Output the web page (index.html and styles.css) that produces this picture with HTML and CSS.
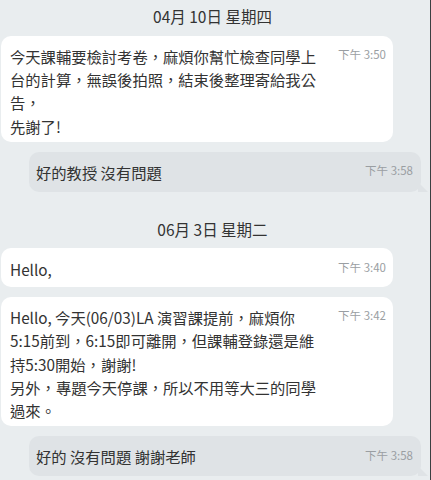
FILE: index.html
```html
<!DOCTYPE html>
<html lang="zh-Hant">
<head>
    <meta charset="UTF-8">
    <meta name="viewport" content="width=device-width, initial-scale=1.0">
    <title>訊息</title>
    <link rel="stylesheet" href="styles.css">
</head>
<body>
    <div class="chat">
        <div class="date">04月 10日 星期四</div>
        <div class="msg in">
            <div class="text">今天課輔要檢討考卷，麻煩你幫忙檢查同學上台的計算，無誤後拍照，結束後整理寄給我公告，<br>先謝了!</div>
            <div class="time">下午 3:50</div>
        </div>
        <div class="msg out">
            <div class="text">好的教授 沒有問題</div>
            <div class="time">下午 3:58</div>
        </div>

        <div class="date second">06月 3日 星期二</div>
        <div class="msg in short">
            <div class="text">Hello,</div>
            <div class="time">下午 3:40</div>
        </div>
        <div class="msg in">
            <div class="text">Hello, 今天(06/03)LA 演習課提前，麻煩你<br>5:15前到，6:15即可離開，但課輔登錄還是維持5:30開始，謝謝!<br>另外，專題今天停課，所以不用等大三的同學過來。</div>
            <div class="time">下午 3:42</div>
        </div>
        <div class="msg out">
            <div class="text">好的 沒有問題 謝謝老師</div>
            <div class="time">下午 3:58</div>
        </div>
    </div>
</body>
</html>
```

FILE: styles.css
```css
* { margin: 0; padding: 0; box-sizing: border-box; }
html, body { height: 100%; }
body { font-family: "Noto Sans CJK TC", "Noto Sans", sans-serif; background: #e9edef; color: #333; overflow: hidden; }
.chat { height: 480px; padding: 6px 0 0 1px; width: 431px; border-right: 1px solid #3a4042; display: flex; flex-direction: column; }
.date { text-align: center; font-size: 15.5px; line-height: 20px; color: #333; padding-right: 6px; margin-bottom: 10px; }
.date.second { margin-top: 18px; margin-bottom: 9px; }
.msg { display: flex; align-items: flex-start; border-radius: 10px; position: relative; }
.msg .text { font-size: 15.3px; line-height: 23.2px; }
.msg .time { font-size: 11.5px; color: #9a9ea2; white-space: nowrap; line-height: 16px; margin-left: auto; }
.msg.in { background: #fff; width: 392px; padding: 9px 7px 4px 9px; margin-bottom: 10px; }
.msg.in.short { padding-top: 10px; padding-bottom: 6px; }
.msg.in .text { width: 318px; }
.msg.in .time { margin-top: 1px; }
.msg.out { background: #dfe3e6; margin-left: 28px; width: 392px; padding: 9px 8px 8px 7px; align-items: center; margin-bottom: 9px; }
.msg.out .time { margin-top: -4px; }
.msg.out::after { content: ""; position: absolute; right: -7px; bottom: 0; border-left: 10px solid #dfe3e6; border-top: 10px solid transparent; }
```
